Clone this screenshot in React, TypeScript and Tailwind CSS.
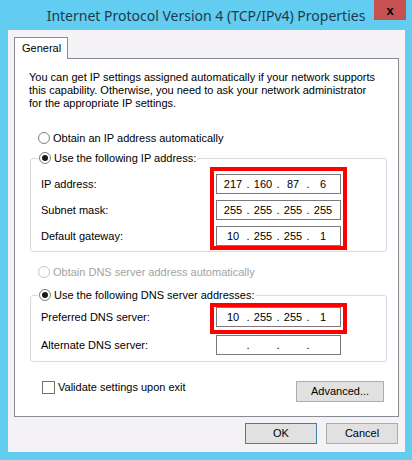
import React from 'react';

const font = "font-['Liberation_Sans','Arial',sans-serif]";

function Radio({ checked, disabled }: { checked?: boolean; disabled?: boolean }) {
  return (
    <span
      className={`w-[12px] h-[12px] rounded-full border bg-white flex items-center justify-center shrink-0 ${
        disabled ? 'border-[#c6c6c6]' : 'border-[#7d7d7d]'
      }`}
    >
      {checked && <span className="w-[6px] h-[6px] rounded-full bg-[#1a1a1a]" />}
    </span>
  );
}

function IpBox({ octets }: { octets: string[] }) {
  return (
    <div className="w-[125px] h-[20px] border border-[#7a7a7a] bg-white flex items-center pl-[4px] text-[11px] leading-none text-black">
      {octets.map((o, i) => (
        <React.Fragment key={i}>
          <span className="w-[24px] text-center">{o}</span>
          {i < 3 && <span className="w-[6px] text-center">.</span>}
        </React.Fragment>
      ))}
    </div>
  );
}

function Row({ label, octets }: { label: string; octets: string[] }) {
  return (
    <div className="flex items-center">
      <span className="w-[185px] pl-[10px]">{label}</span>
      <IpBox octets={octets} />
    </div>
  );
}

function Button({ children, primary, className = '' }: { children: React.ReactNode; primary?: boolean; className?: string }) {
  return (
    <div
      className={`h-[21px] flex items-center justify-center bg-[#e1e1e1] border text-[11px] text-black ${
        primary ? 'border-[#3c7fb1]' : 'border-[#adadad]'
      } ${className}`}
    >
      {children}
    </div>
  );
}

export default function App() {
  return (
    <div className={`relative w-[412px] h-[460px] bg-[#62cdf0] flex flex-col ${font}`}>
      {/* title bar */}
      <div className="relative h-[30px] flex items-center justify-center">
        <span className="text-[14px] text-[#1d3a4f] pt-[1px] font-['Noto_Sans',sans-serif]">
          Internet Protocol Version 4 (TCP/IPv4) Properties
        </span>
        <div className="absolute top-0 right-[6px] w-[32px] h-[20px] bg-[#c75050] flex items-center justify-center">
          <span className="text-[13px] font-bold text-black leading-none">x</span>
        </div>
      </div>

      {/* client area */}
      <div className="ml-[8px] mr-[7px] h-[422px] bg-[#f5f2f6] flex flex-col pt-[7px] px-[6px]">
        <div className="relative z-10 w-[54px] h-[22px] -mb-px border border-b-0 border-[#898c95] bg-white flex items-center pl-[7px] text-[11px] text-black">
          General
        </div>

        <div className="h-[359px] border border-[#898c95] bg-white pl-[14px] pt-[12px] flex flex-col text-[11px] text-black">
          <p className="leading-[13px] whitespace-nowrap">
            You can get IP settings assigned automatically if your network supports
            <br />
            this capability. Otherwise, you need to ask your network administrator
            <br />
            for the appropriate IP settings.
          </p>

          <div className="mt-[20px] h-[16px] flex items-center gap-[3px] pl-[9px]">
            <Radio />
            <span>Obtain an IP address automatically</span>
          </div>

          <fieldset className="mt-[4px] ml-[1px] w-[357px] border border-[#d6dbe3] rounded-[3px] pb-[5px]">
            <legend className="ml-[7px] px-[1px] h-[16px] flex items-center gap-[3px] bg-white">
              <Radio checked />
              <span>Use the following IP address:</span>
            </legend>
            <div className="pt-[8px] flex flex-col gap-[6px]">
              <Row label="IP address:" octets={['217', '160', '87', '6']} />
              <Row label="Subnet mask:" octets={['255', '255', '255', '255']} />
              <Row label="Default gateway:" octets={['10', '255', '255', '1']} />
            </div>
          </fieldset>

          <div className="mt-[12px] h-[16px] flex items-center gap-[3px] pl-[9px] text-[#a3a3a3]">
            <Radio disabled />
            <span>Obtain DNS server address automatically</span>
          </div>

          <fieldset className="mt-[7px] ml-[1px] w-[357px] border border-[#d6dbe3] rounded-[3px] pb-[6px]">
            <legend className="ml-[7px] px-[1px] h-[16px] flex items-center gap-[3px] bg-white">
              <Radio checked />
              <span>Use the following DNS server addresses:</span>
            </legend>
            <div className="pt-[4px] flex flex-col gap-[8px]">
              <Row label="Preferred DNS server:" octets={['10', '255', '255', '1']} />
              <Row label="Alternate DNS server:" octets={['', '', '', '']} />
            </div>
          </fieldset>

          <div className="mt-[19px] flex items-start pr-[14px]">
            <div className="flex items-center gap-[3px] pl-[13px] mt-[-2px]">
              <span className="w-[13px] h-[13px] border border-[#707070] bg-white" />
              <span>Validate settings upon exit</span>
            </div>
            <Button className="ml-auto w-[88px]">Advanced...</Button>
          </div>
        </div>

        <div className="mt-[6px] flex justify-end gap-[9px] pr-[1px]">
          <Button primary className="w-[72px]">OK</Button>
          <Button className="w-[72px]">Cancel</Button>
        </div>
      </div>

      {/* red annotation boxes */}
      <div className="absolute left-[210px] top-[167px] w-[137px] h-[83px] border-[4px] border-[#ff0000]" />
      <div className="absolute left-[210px] top-[303px] w-[137px] h-[31px] border-[4px] border-[#ff0000]" />
    </div>
  );
}
